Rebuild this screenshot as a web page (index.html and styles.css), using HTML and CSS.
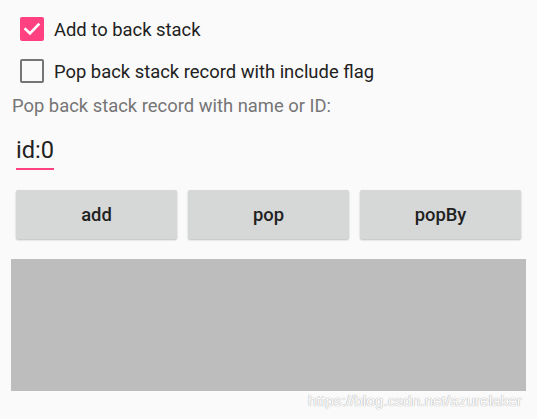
FILE: index.html
```html
<!DOCTYPE html>
<html lang="en">
<head>
    <meta charset="UTF-8">
    <title>Fragment</title>
    <link rel="stylesheet" href="styles.css">
</head>
<body>
    <main class="screen">
        <label class="check-row">
            <span class="box checked">
                <svg width="24" height="24" viewBox="0 0 24 24"><path d="M5.5 12.2 L10 16.5 L18.5 7.5" fill="none" stroke="#fff" stroke-width="2.6" stroke-linecap="square"/></svg>
            </span>
            <span class="check-text">Add to back stack</span>
        </label>
        <label class="check-row">
            <span class="box"></span>
            <span class="check-text">Pop back stack record with include flag</span>
        </label>

        <p class="hint">Pop back stack record with name or ID:</p>
        <div class="field">
            <span class="field-value">id:0</span>
        </div>

        <div class="buttons">
            <button type="button" class="btn">add</button>
            <button type="button" class="btn">pop</button>
            <button type="button" class="btn">popBy</button>
        </div>

        <div class="container"></div>
        <div class="watermark">https://blog.csdn.net/azurelaker</div>
    </main>
</body>
</html>
```

FILE: styles.css
```css
html,
body {
    margin: 0;
    background-color: #fafafa;
}

.screen {
    width: 537px;
    height: 419px;
    padding-top: 8px;
    box-sizing: border-box;
    font-family: Roboto, "Noto Sans", sans-serif;
    color: #212121;
}

.check-row {
    display: flex;
    align-items: center;
    height: 42px;
    padding-left: 20px;
}

.box {
    width: 24px;
    height: 24px;
    box-sizing: border-box;
    border: 2.5px solid #757575;
    border-radius: 2px;
}

.box.checked {
    border: none;
    background-color: #ff4081;
}

.box svg {
    display: block;
}

.check-text {
    margin-left: 10px;
    font-size: 18.4px;
}

.hint {
    margin: 3px 0 0 0;
    padding-left: 12px;
    font-size: 18.4px;
    line-height: 22px;
    color: #757575;
}

.field {
    height: 73px;
    box-sizing: border-box;
    padding: 20px 0 0 16px;
}

.field-value {
    display: inline-block;
    font-size: 23.6px;
    line-height: 26px;
    padding-bottom: 5px;
    border-bottom: 2px solid #ff4081;
}

.buttons {
    display: flex;
    gap: 11px;
    padding: 0 16px;
}

.btn {
    flex: 1;
    height: 49px;
    border: none;
    border-radius: 2px;
    background-color: #d6d7d7;
    box-shadow: 0 1px 2px rgba(0, 0, 0, 0.25);
    font-family: Roboto, "Noto Sans", sans-serif;
    font-size: 18.4px;
    font-weight: 500;
    color: #212121;
}

.container {
    margin: 20px 11px 0 11px;
    height: 132px;
    background-color: #bdbdbd;
}

.watermark {
    padding-right: 15px;
    margin-top: 1px;
    text-align: right;
    font-family: "Liberation Sans", Arial, sans-serif;
    font-size: 15.4px;
    line-height: 18px;
    color: #fcfcfc;
    text-shadow: 0 0 1px #b0b0b0, 0 0 1px #b0b0b0;
}
```
